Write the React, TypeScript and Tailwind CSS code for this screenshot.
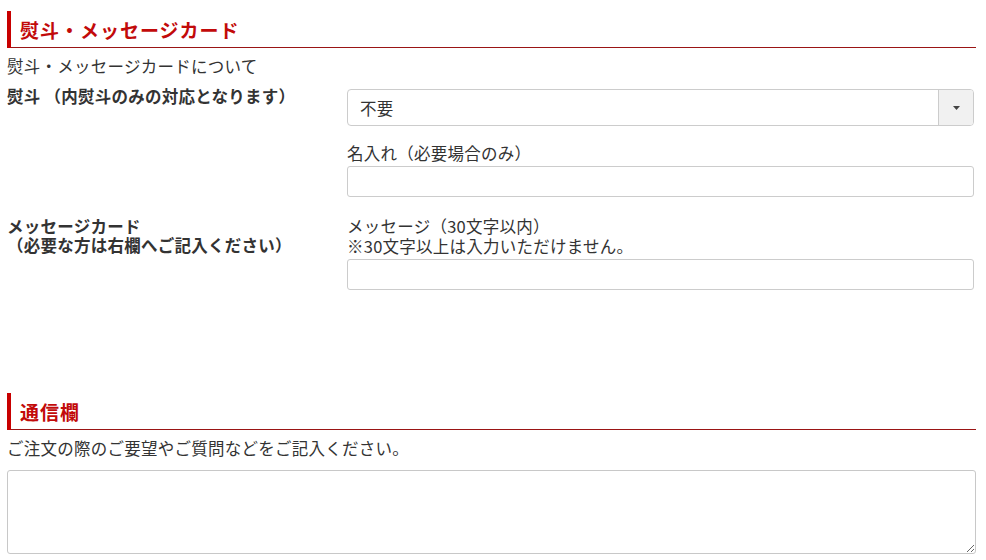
import React from "react";

const font = { fontFamily: '"Noto Sans CJK JP", "Noto Sans", sans-serif' };

function SectionHeader({ title }: { title: string }) {
  return (
    <div className="border-l-4 border-l-[#c80000]">
      <div className="flex h-[36px] items-center pl-[9px]">
        <h2 className="text-[19px] font-bold leading-none tracking-[1px] text-[#c20a0a]">{title}</h2>
      </div>
      <div className="h-px bg-[#9a1515]" />
    </div>
  );
}

export default function App() {
  return (
    <div className="min-h-[560px] w-[986px] bg-white text-[16.5px] leading-[20px] tracking-[0.25px] text-[#333]" style={font}>
      <div className="ml-[7px] w-[969px] pt-[11px]">
        <SectionHeader title="熨斗・メッセージカード" />
        <p className="mt-[8px]">熨斗・メッセージカードについて</p>

        <div className="mt-[13px] flex">
          <div className="mt-[-3px] w-[340px] shrink-0 font-bold">熨斗 （内熨斗のみの対応となります）</div>
          <div className="w-[627px]">
            <div className="flex h-[37px] overflow-hidden rounded-[4px] border border-[#ccc] bg-white">
              <div className="flex flex-1 items-center pl-[12px]">不要</div>
              <div className="flex w-[35px] items-center justify-center border-l border-[#ccc] bg-[#f1f1f1]">
                <svg width="7" height="4" viewBox="0 0 7 4">
                  <path d="M0 0 H7 L3.5 4 Z" fill="#444" />
                </svg>
              </div>
            </div>
            <p className="mt-[17px]">名入れ（必要場合のみ）</p>
            <input className="mt-[3px] block h-[31px] w-full rounded-[3px] border border-[#ccc] bg-white outline-none" />
          </div>
        </div>

        <div className="mt-[19px] flex">
          <div className="w-[340px] shrink-0 pt-[1px] font-bold leading-[19px]">
            <p>メッセージカード</p>
            <p>（必要な方は右欄へご記入ください）</p>
          </div>
          <div className="w-[627px]">
            <p>メッセージ（30文字以内）</p>
            <p>※30文字以上は入力いただけません。</p>
            <input className="mt-[3px] block h-[31px] w-full rounded-[3px] border border-[#ccc] bg-white outline-none" />
          </div>
        </div>

        <div className="mt-[103px]">
          <SectionHeader title="通信欄" />
        </div>
        <p className="mt-[8px]">ご注文の際のご要望やご質問などをご記入ください。</p>
        <textarea className="mt-[12px] block h-[84px] w-full rounded-[3px] border border-[#c8c8c8] bg-white outline-none" />
      </div>
    </div>
  );
}
